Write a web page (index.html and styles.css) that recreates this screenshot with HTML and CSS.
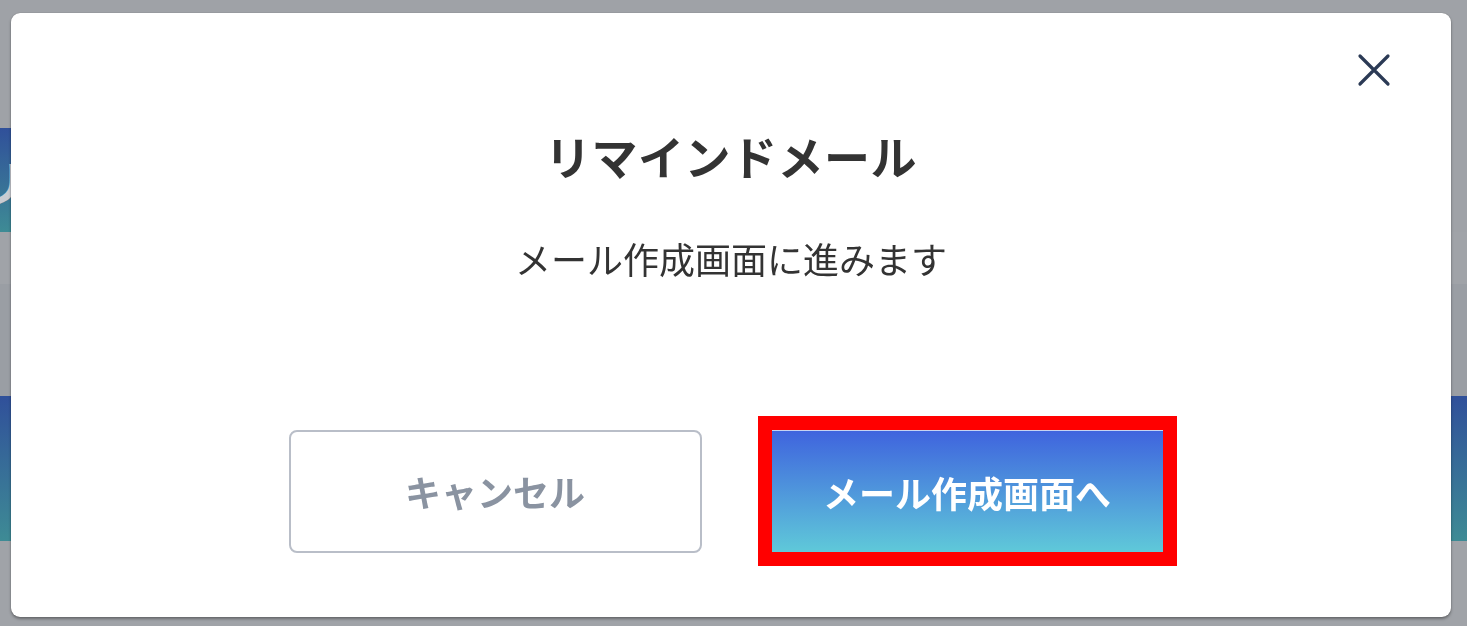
FILE: index.html
```html
<!DOCTYPE html>
<html lang="ja">
<head>
    <meta charset="UTF-8">
    <title>リマインドメール</title>
    <link rel="stylesheet" href="styles.css">
</head>
<body>
    <div class="page">
        <div class="band band-top"></div>
        <div class="band band-head"><span class="head-text">リ</span></div>
        <div class="band band-gap"></div>
        <div class="band band-mid"></div>
        <div class="band band-blue"></div>
        <div class="band band-bottom"></div>
    </div>

    <div class="modal">
        <button class="close-btn" aria-label="閉じる">
            <svg width="34" height="34" viewBox="0 0 34 34">
                <path d="M3 3 L31 31 M31 3 L3 31" stroke="#2b3a55" stroke-width="3.2" stroke-linecap="round" fill="none"/>
            </svg>
        </button>
        <h2 class="modal-title">リマインドメール</h2>
        <p class="modal-text">メール作成画面に進みます</p>
        <div class="modal-actions">
            <button class="btn btn-cancel">キャンセル</button>
            <div class="highlight">
                <button class="btn btn-primary">メール作成画面へ</button>
            </div>
        </div>
    </div>
</body>
</html>
```

FILE: styles.css
```css
html, body { margin: 0; padding: 0; }
body { font-family: "Noto Sans CJK JP", "Noto Sans", sans-serif; background-color: #9fa2a7; height: 626px; overflow: hidden; }

.page { display: flex; flex-direction: column; }
.band { width: 100%; }
.band-top { height: 128px; background-color: #9fa2a7; }
.band-head { height: 104px; width: 300px; background: linear-gradient(#30509a, #3e8b95); overflow: hidden; }
.head-text { display: block; color: #c9ccd2; font-size: 48px; font-weight: bold; line-height: 104px; margin-left: -22px; }
.band-gap { height: 52px; background-color: #a0a3a8; }
.band-mid { height: 112px; background-color: #9a9ea4; }
.band-blue { height: 145px; background: linear-gradient(#30509a, #3e8b95); }
.band-bottom { height: 85px; background-color: #a0a3a8; }

.modal { position: fixed; left: 11px; top: 13px; width: 1440px; height: 604px; box-sizing: border-box; background-color: #fff; border-radius: 9px; box-shadow: 0 2px 3px rgba(0, 0, 0, 0.35), 0 0 1px rgba(0, 0, 0, 0.4); display: flex; flex-direction: column; align-items: center; padding-top: 112px; }

.close-btn { position: absolute; top: 40px; right: 60px; width: 34px; height: 34px; padding: 0; border: none; background: none; cursor: pointer; }
.close-btn svg { display: block; }

.modal-title { margin: 0; font-size: 46px; line-height: 60px; font-weight: bold; color: #333; letter-spacing: 0.5px; }
.modal-text { margin: 49px 0 0; font-size: 36px; line-height: 48px; color: #333; }

.modal-actions { display: flex; align-items: center; gap: 56px; margin-top: 134px; margin-left: 3px; }
.btn { font-family: inherit; font-size: 36px; font-weight: bold; cursor: pointer; }
.btn-cancel { width: 413px; height: 123px; background-color: #fff; border: 2px solid #b9bec8; border-radius: 8px; color: #8a93a1; }
.highlight { border: 14px solid #ff0000; }
.btn-primary { display: block; width: 391px; height: 122px; border: none; border-top: 1px solid #c6d3f2; background: linear-gradient(#3f64de, #5fc9d9); color: #fff; }
```
